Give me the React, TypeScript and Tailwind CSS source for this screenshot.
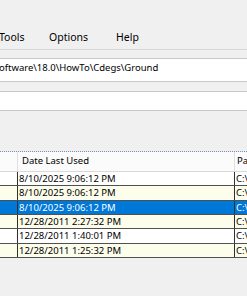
import React from "react";

const rows = [
  { d: "8/10/2025 9:06:12 PM", bg: "bg-white", sel: false },
  { d: "8/10/2025 9:06:12 PM", bg: "bg-[#fdfdec]", sel: false },
  { d: "8/10/2025 9:06:12 PM", bg: "bg-[#0078d7]", sel: true },
  { d: "12/28/2011 2:27:32 PM", bg: "bg-[#fdfdec]", sel: false },
  { d: "12/28/2011 1:40:01 PM", bg: "bg-white", sel: false },
  { d: "12/28/2011 1:25:32 PM", bg: "bg-[#fdfdec]", sel: false },
];

export default function App() {
  return (
    <div
      className="w-[247px] h-[296px] overflow-hidden bg-[#f0f0f0] text-black"
      style={{ fontFamily: '"Noto Sans", "Open Sans", sans-serif' }}
    >
      {/* title / top area */}
      <div className="h-[27px]" />
      {/* menu bar */}
      <div className="h-[22px] flex items-center text-[10.5px] leading-none">
        <span className="w-[50px] pb-[2px] -ml-[1px]">Tools</span>
        <span className="w-[67px] pb-[2px]">Options</span>
        <span className="pb-[2px]">Help</span>
      </div>
      {/* band */}
      <div className="h-[9px] border-t border-[#d8d8d8]" />
      {/* path textbox */}
      <div className="h-[24px] bg-white border-y border-[#c8c8c8] flex items-center overflow-hidden whitespace-nowrap text-[9.5px] leading-none">
        <span className="-ml-[1px] pb-[4px]">oftware\18.0\HowTo\Cdegs\Ground</span>
      </div>
      {/* band */}
      <div className="h-[9px]" />
      {/* empty box */}
      <div className="h-[20px] bg-white border-y border-[#c8c8c8]" />
      {/* gap */}
      <div className="h-[40px]" />
      {/* table */}
      <div className="border-t border-dotted border-[#7d8fb0] text-[9.5px] leading-none">
        <div className="h-[20px] flex bg-[#fbfbfb] border-b border-[#d9d9d9]">
          <div className="w-[18px] border-r border-[#e0e0e0]" />
          <div className="w-[217px] border-r border-[#e0e0e0] flex items-center pl-[4px] pb-[1px]">
            Date Last Used
          </div>
          <div className="flex-1 flex items-center pl-[2px] pb-[1px] overflow-hidden whitespace-nowrap">
            Path
          </div>
        </div>
        {rows.map((r, i) => (
          <div
            key={i}
            className={`h-[14.33px] flex border-b border-[#505050] ${r.bg} ${
              r.sel ? "text-white" : "text-black"
            }`}
          >
            <div className="w-[18px] border-r border-[#303030]" />
            <div className="w-[217px] border-r border-[#303030] flex items-center pl-[1px] whitespace-nowrap">
              {r.d}
            </div>
            <div className="flex-1 flex items-center pl-[1px] overflow-hidden whitespace-nowrap">
              C:\Users
            </div>
          </div>
        ))}
      </div>
    </div>
  );
}
